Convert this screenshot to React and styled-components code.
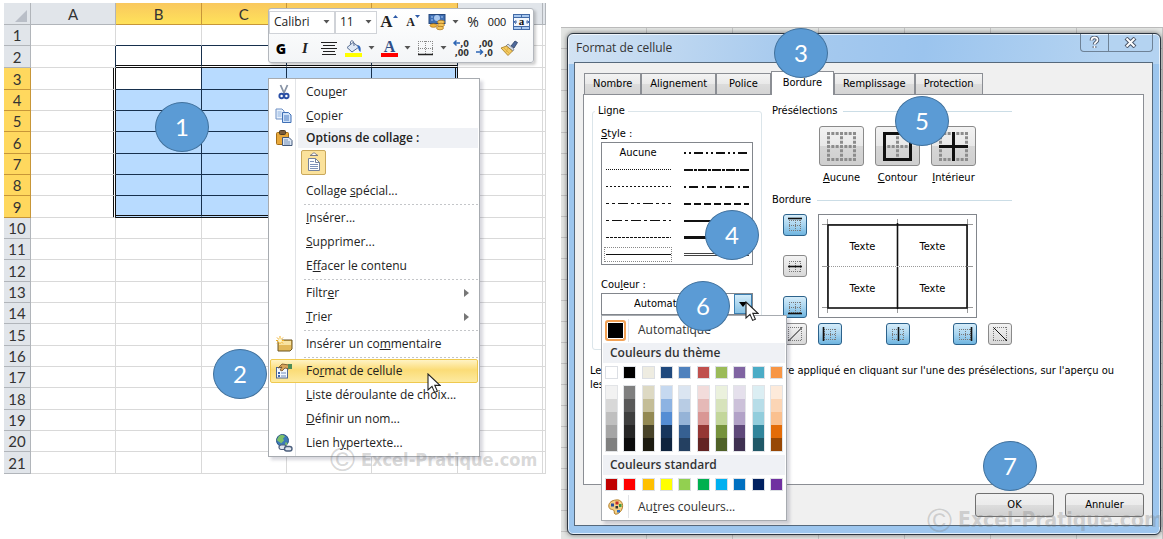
import React from 'react';

import styled, { createGlobalStyle, css } from 'styled-components';

const COLUMNS = ['A', 'B', 'C', 'D', 'E', 'F', ''];
const ROWS = Array.from({ length: 21 }, (_, i) => i + 1);
const TALL_ROWS = [2, 3, 6, 9, 12, 15, 18, 21];

const inBox = (row, col) => col >= 1 && col <= 4 && row >= 2 && row <= 9;
const isSelected = (row, col) => inBox(row, col) && row >= 3 && !(row === 3 && col === 1);

const GRID = '1px solid #d9d9d9';
const THIN = '1px solid #17304d';
const DOUBLE = '3px double #111';

const rightBorder = (row, col) => {
  if (row >= 3 && row <= 9 && (col === 0 || col === 4)) return DOUBLE;
  if (row >= 2 && row <= 9 && col >= 0 && col <= 4) return THIN;
  return GRID;
};

const bottomBorder = (row, col) => {
  if (col < 1 || col > 4) return GRID;
  if (row === 2 || row === 9) return DOUBLE;
  if (row >= 1 && row <= 8) return THIN;
  return GRID;
};

const THEME_COLORS = [
  ['#ffffff', '#f2f2f2', '#d8d8d8', '#bfbfbf', '#a5a5a5', '#7f7f7f'],
  ['#000000', '#7f7f7f', '#595959', '#3f3f3f', '#262626', '#0c0c0c'],
  ['#eeece1', '#ddd9c3', '#c4bd97', '#938953', '#494429', '#1d1b10'],
  ['#1f497d', '#c6d9f0', '#8db3e2', '#548dd4', '#17365d', '#0f243e'],
  ['#4f81bd', '#dbe5f1', '#b8cce4', '#95b3d7', '#366092', '#244061'],
  ['#c0504d', '#f2dcdb', '#e5b9b7', '#d99694', '#953734', '#632423'],
  ['#9bbb59', '#ebf1dd', '#d7e3bc', '#c3d69b', '#76923c', '#4f6128'],
  ['#8064a2', '#e5e0ec', '#ccc1d9', '#b2a2c7', '#5f497a', '#3f3151'],
  ['#4bacc6', '#dbeef3', '#b7dde8', '#92cddc', '#31859b', '#205867'],
  ['#f79646', '#fdeada', '#fbd5b5', '#fac08f', '#e36c09', '#974806'],
];

const STANDARD_COLORS = [
  '#c00000', '#ff0000', '#ffc000', '#ffff00', '#92d050',
  '#00b050', '#00b0f0', '#0070c0', '#002060', '#7030a0',
];

const LINE_STYLES = [
  null,
  { width: 2, dash: '2 3 2 3 9 3', name: 'Tirets deux points épais' },
  { width: 1, dash: '1 1', name: 'Pointillés fins' },
  { width: 2, dash: '9 1 3 1', name: 'Tirets obliques' },
  { width: 1, dash: '2 2', name: 'Pointillés' },
  { width: 2, dash: '2 3 9 4', name: 'Tirets points épais' },
  { width: 1, dash: '3 3 3 3 10 3', name: 'Tirets deux points' },
  { width: 2, dash: '7 3', name: 'Tirets épais' },
  { width: 1, dash: '3 3 10 3', name: 'Tirets points' },
  { width: 2, name: 'Trait moyen' },
  { width: 1, dash: '3 1', name: 'Tirets' },
  { width: 3, name: 'Trait épais' },
  { width: 1, name: 'Trait fin', selected: true },
  { width: 1, double: true, name: 'Trait double' },
];

/* "&" marks the access key, as in "Cou&per" */
const Hot = ({ text }) => {
  const i = text.indexOf('&');
  if (i < 0) return <span>{text}</span>;
  return (
    <span>
      {text.slice(0, i)}
      <u>{text[i + 1]}</u>
      {text.slice(i + 2)}
    </span>
  );
};

/* ---------- icons ---------- */

const ArrowDown = () => (
  <svg width="7" height="4" viewBox="0 0 7 4" aria-hidden="true">
    <path d="M0.5 0h6L3.5 3.6z" fill="#555" />
  </svg>
);

const Pointer = () => (
  <svg width="14" height="21" viewBox="0 0 14 21" aria-hidden="true">
    <path d="M1 1v16l4-3.6 2.6 6 2.8-1.2-2.6-5.8H13z" fill="#fff" stroke="#222" strokeWidth="1.1" />
  </svg>
);

const CutIcon = () => (
  <svg width="16" height="16" viewBox="0 0 16 16" aria-hidden="true">
    <path d="M4.500 1l4 9M11.500 1L7.500 10" stroke="#8793a5" strokeWidth="1.8" />
    <circle cx="5.6" cy="12" r="2.2" fill="none" stroke="#2a4fa5" strokeWidth="1.9" />
    <circle cx="10.4" cy="12" r="2.2" fill="none" stroke="#2a4fa5" strokeWidth="1.9" />
  </svg>
);

const CopyIcon = () => (
  <svg width="17" height="16" viewBox="0 0 17 16" aria-hidden="true">
    <path d="M1 1h6l2 2v8H1z" fill="#eaf2fc" stroke="#6d8fc4" />
    <path d="M2.5 4h4M2.5 6h4M2.5 8h4" stroke="#8db1e0" />
    <path d="M7.500 4.500h6l2.500 2.500v7.500H7.500z" fill="#cfe2f9" stroke="#3f6fb5" />
    <path d="M9 8h5M9 10h5M9 12h5" stroke="#4c7cc2" />
  </svg>
);

const PasteIcon = () => (
  <svg width="18" height="16" viewBox="0 0 18 16" aria-hidden="true">
    <rect x="1.500" y="2.500" width="12" height="12" rx="1" fill="#e9a93c" stroke="#a36d17" />
    <rect x="4.500" y="0.500" width="6" height="4" rx="1" fill="#7b5d3a" stroke="#4d3b24" />
    <path d="M7.500 7.500h6.500l3 3v5H7.500z" fill="#dce7f5" stroke="#44597a" />
    <path d="M9 10h4M9 12h6M9 14h6" stroke="#7791b8" />
  </svg>
);

const PasteOptionIcon = () => (
  <svg width="18" height="22" viewBox="0 0 18 22" aria-hidden="true">
    <path d="M5 3.500l2-1c0-2 4-2 4 0l2 1z" fill="#fff" stroke="#7c7c85" />
    <path d="M3.500 6.500h7l4 4v8h-11z" fill="#fff" stroke="#76829b" />
    <path d="M10.500 6.500v4h4" fill="none" stroke="#76829b" />
    <path d="M5 9.500h4M5 12.500h8M5 14.500h8M5 16.500h8" stroke="#7f93ba" />
  </svg>
);

const CommentIcon = () => (
  <svg width="18" height="16" viewBox="0 0 18 16" aria-hidden="true">
    <path d="M3 4h14v9l-2 2H3z" fill="#e3b95a" stroke="#6b5420" />
    <path d="M4 5h12v4H4z" fill="#f8e3a2" />
    <path d="M5 0v8M1 4.500h8M2 1.500l6 6M8 1.500l-6 6" stroke="#f2ae23" />
    <circle cx="5" cy="4.500" r="2" fill="#fff6c8" />
  </svg>
);

const FormatIcon = () => (
  <svg width="18" height="16" viewBox="0 0 18 16" aria-hidden="true">
    <rect x="1.500" y="4.500" width="11" height="10.500" fill="#f4f8fd" stroke="#4c6590" />
    <rect x="3" y="9" width="2" height="2" fill="#3d65ac" />
    <rect x="3" y="12" width="2" height="2" fill="#3d65ac" />
    <path d="M6 10h5M6 13h5" stroke="#6f8cbc" />
    <path d="M3 5l4-4 7 1v4l-4-1-3 3-2-1 2-3z" fill="#d8a45a" stroke="#6d4d22" strokeWidth="0.800" />
    <rect x="13" y="1" width="4" height="5" fill="#4f8c57" />
  </svg>
);

const LinkIcon = () => (
  <svg width="18" height="18" viewBox="0 0 18 18" aria-hidden="true">
    <circle cx="7.500" cy="6.500" r="6" fill="#3b78b8" stroke="#2a5482" />
    <path d="M4 2c2-1.500 5-1 6 .5l-2 2 1 2-3 3c-1-2-4-2-4-4z" fill="#7cc06a" />
    <path d="M10.500 8l2 1-.5 2-2 0z" fill="#7cc06a" />
    <rect x="4" y="11" width="7.500" height="4.500" rx="2.200" fill="#dfe5ee" stroke="#4c5f7d" strokeWidth="1.200" />
    <rect x="9.500" y="12.500" width="7.500" height="4.500" rx="2.200" fill="#dfe5ee" stroke="#4c5f7d" strokeWidth="1.400" />
  </svg>
);

const CurrencyIcon = () => (
  <svg width="18" height="18" viewBox="0 0 18 18" aria-hidden="true">
    <rect x="1" y="1.500" width="16" height="9" fill="#3f6fb4" stroke="#27497d" />
    <circle cx="9" cy="5" r="3" fill="#a9c8ef" />
    <path d="M3 4h2M3 7h2M13 4h2" stroke="#a9c8ef" />
    <ellipse cx="13" cy="9" rx="3.500" ry="1.800" fill="#f5c65a" stroke="#a86f14" strokeWidth="0.700" />
    <ellipse cx="13" cy="12" rx="3.500" ry="1.800" fill="#f5c65a" stroke="#a86f14" strokeWidth="0.700" />
    <ellipse cx="12" cy="15" rx="3.500" ry="1.800" fill="#f5c65a" stroke="#a86f14" strokeWidth="0.700" />
    <ellipse cx="5.500" cy="12.500" rx="3.500" ry="1.800" fill="#f0b53e" stroke="#a86f14" strokeWidth="0.700" />
  </svg>
);

const MergeIcon = () => (
  <svg width="17" height="16" viewBox="0 0 17 16" aria-hidden="true">
    <rect x="0.500" y="0.500" width="16" height="15" fill="#a9c9f0" stroke="#426aa6" />
    <path d="M0 3.500h17M0 12.500h17M8.500 0v4M8.500 12v4" stroke="#426aa6" />
    <rect x="1" y="4" width="15" height="8" fill="#f2f7fd" />
    <path d="M1 8h3M3 6.300L1.300 8 3 9.700M16 8h-3M14 6.300L15.700 8 14 9.700" fill="none" stroke="#26529a" />
    <text x="8.500" y="11" fontSize="11" fontWeight="700" textAnchor="middle" fontFamily="Liberation Serif, serif" fill="#111">a</text>
  </svg>
);

const AlignIcon = () => (
  <svg width="16" height="14" viewBox="0 0 16 14" aria-hidden="true">
    <path d="M0 1.500h16M2 4.500h12M0 7.500h16M2 10.500h12M1 13.500h14" stroke="#222" strokeWidth="1.200" />
  </svg>
);

const BucketIcon = () => (
  <svg width="17" height="17" viewBox="0 0 17 17" aria-hidden="true">
    <rect x="0" y="13" width="17" height="4" fill="#ffff00" />
    <path d="M2 7.500l6-5 6 4.500-7 5z" fill="#dfe9f6" stroke="#596f93" />
    <path d="M5.500 5c-1-6 4-6 3.500 1" fill="none" stroke="#596f93" />
    <path d="M12 5c4 0 4 4 3.500 7-1.500-1-2-2-2.500-5z" fill="#2f66bb" />
  </svg>
);

const FontColorIcon = () => (
  <svg width="17" height="18" viewBox="0 0 17 18" aria-hidden="true">
    <rect x="0" y="14" width="17" height="4" fill="#ff0000" />
    <text x="8.500" y="12.500" fontSize="16" fontWeight="700" textAnchor="middle" fontFamily="Liberation Serif, serif" fill="#2f4f88">A</text>
  </svg>
);

const BorderIcon = () => (
  <svg width="15" height="15" viewBox="0 0 15 15" aria-hidden="true">
    <path d="M0.500 0v14M7.500 0v14M14.500 0v14M0 0.500h15M0 7.500h15" stroke="#888" strokeDasharray="1 1" />
    <path d="M0 13.500h15" stroke="#222" strokeWidth="1.500" />
  </svg>
);

const DecimalIcon = ({ more }) => (
  <svg width="18" height="20" viewBox="0 0 18 20" aria-hidden="true">
    <g fontSize="9" fontWeight="700" fontFamily="DejaVu Sans Condensed, sans-serif" fill="#333">
      <text x="17" y="9" textAnchor="end">{more ? ',0' : ',00'}</text>
      <text x="17" y="18" textAnchor="end">{more ? ',00' : ',0'}</text>
    </g>
    {more ? (
      <path d="M8 5H2M4.500 2.500L2 5l2.500 2.500" fill="none" stroke="#2d66b5" strokeWidth="1.500" />
    ) : (
      <path d="M0 14h6M4 11.500L6.500 14 4 16.500" fill="none" stroke="#2d66b5" strokeWidth="1.500" />
    )}
  </svg>
);

const BrushIcon = () => (
  <svg width="18" height="16" viewBox="0 0 18 16" aria-hidden="true">
    <path d="M11 6l4-5 2.500 1.500L14 8z" fill="#4f6a9c" stroke="#2d4063" strokeWidth="0.800" />
    <path d="M8 4l6 5-1 2-7-5z" fill="#d7dde7" stroke="#6e7a8f" strokeWidth="0.800" />
    <path d="M6.500 6l6 5-4.500 4.500L1 8z" fill="#f3ca62" stroke="#a57a1c" strokeWidth="0.800" />
    <path d="M4 8l5 5M8 8L6 12" stroke="#dca93a" strokeWidth="0.800" />
  </svg>
);

const PaletteIcon = () => (
  <svg width="16" height="16" viewBox="0 0 16 16" aria-hidden="true">
    <path d="M8 1c5-1 8 4 6 9-1 3-5 6-7 5-1.500-1 0-3-1.500-4C4 10 1 11 .8 7 .7 3.500 4 1.300 8 1z" fill="#f3cf86" stroke="#b37f29" />
    <rect x="3" y="4.500" width="3" height="3" fill="#2c4f9c" />
    <rect x="7.500" y="2.500" width="3" height="3" fill="#c22b25" />
    <rect x="11" y="5" width="2.500" height="3" fill="#3f9b45" />
    <rect x="7.500" y="7" width="2.500" height="2.500" fill="#333" />
    <rect x="9" y="11" width="3" height="2.500" fill="#2f6fc5" />
  </svg>
);

const PresetIcon = ({ kind }) => (
  <svg width="29" height="29" viewBox="0 0 29 29" aria-hidden="true">
    <path d="M1.500 0v29M14.500 0v29M27.500 0v29M0 1.500h29M0 14.500h29M0 27.500h29" stroke="#8c8c8c" strokeWidth="3" strokeDasharray="3 1.330" />
    {kind === 'outline' && <rect x="1.500" y="1.500" width="26" height="26" fill="none" stroke="#111" strokeWidth="3" />}
    {kind === 'inside' && <path d="M14.500 0v29M0 14.500h29" stroke="#111" strokeWidth="3" />}
  </svg>
);

const EDGE_PATHS = {
  top: 'M1 1.500h14',
  middle: 'M1 8.500h14',
  bottom: 'M1 14.500h14',
  left: 'M1.500 1v14',
  center: 'M8.500 1v14',
  right: 'M14.500 1v14',
  up: 'M1.500 15L15 1.500',
  down: 'M1.500 1.500L15 15',
};

const EdgeIcon = ({ edge }) => {
  const diagonal = edge === 'up' || edge === 'down';
  return (
    <svg width="16" height="16" viewBox="0 0 16 16" aria-hidden="true">
      <path
        d={diagonal ? 'M1.500 1v14M14.500 1v14M1 1.500h14M1 14.500h14' : 'M2.500 3v11M8.500 3v11M13.500 3v11M2 3.500h12M2 8.500h12M2 13.500h12'}
        stroke="#777"
        strokeDasharray="1 1"
      />
      <path d={EDGE_PATHS[edge]} stroke="#111" strokeWidth={diagonal ? 1 : 1.6} />
    </svg>
  );
};

const LineSample = ({ line }) => (
  <svg width="65" height="5" viewBox="0 0 65 5" aria-hidden="true">
    {line.double ? (
      <path d="M0 1.500h65M0 3.500h65" stroke="#444" />
    ) : (
      <path d={line.width === 2 ? 'M0 3h65' : 'M0 2.500h65'} stroke="#111" strokeWidth={line.width} strokeDasharray={line.dash} />
    )}
  </svg>
);

/* ---------- spreadsheet ---------- */

const Sheet = () => (
  <SheetTable>
    <thead>
      <SheetRow $tall>
        <CornerCell>
          <svg width="12" height="12" viewBox="0 0 12 12" aria-hidden="true">
            <path d="M12 0v12H0z" fill="#b9bec7" />
          </svg>
        </CornerCell>
        {COLUMNS.map((name, i) => (
          <ColumnHead key={i} scope="col" $active={i >= 1 && i <= 4} $last={i === 6}>
            {name}
          </ColumnHead>
        ))}
      </SheetRow>
    </thead>
    <tbody>
      {ROWS.map((row) => (
        <SheetRow key={row} $tall={TALL_ROWS.includes(row)}>
          <RowHead scope="row" $active={row >= 3 && row <= 9}>{row}</RowHead>
          {COLUMNS.map((_, col) => (
            <Cell
              key={col}
              $selected={isSelected(row, col)}
              $right={rightBorder(row, col)}
              $bottom={bottomBorder(row, col)}
            />
          ))}
        </SheetRow>
      ))}
    </tbody>
  </SheetTable>
);

const MiniToolbar = () => (
  <Toolbar>
    <ToolbarRow>
      <ToolbarSelect aria-label="Police" $width={66}>
        <option>Calibri</option>
      </ToolbarSelect>
      <ToolbarSelect aria-label="Taille" $width={42}>
        <option>11</option>
      </ToolbarSelect>
      <ToolButton aria-label="Agrandir la police">
        <FontSizeLetter $size={17}>A</FontSizeLetter>
        <svg width="5" height="14" viewBox="0 0 5 14" aria-hidden="true"><path d="M0 3l2.500-3L5 3z" fill="#2d5aa8" /></svg>
      </ToolButton>
      <ToolButton aria-label="Réduire la police">
        <FontSizeLetter $size={12}>A</FontSizeLetter>
        <svg width="5" height="14" viewBox="0 0 5 14" aria-hidden="true"><path d="M0 0h5L2.500 3z" fill="#2d5aa8" /></svg>
      </ToolButton>
      <ToolButton aria-label="Format comptabilité"><CurrencyIcon /></ToolButton>
      <ToolArrow aria-label="Autres formats"><ArrowDown /></ToolArrow>
      <ToolButton>%</ToolButton>
      <ToolButton $small>000</ToolButton>
      <ToolButton aria-label="Fusionner et centrer"><MergeIcon /></ToolButton>
    </ToolbarRow>
    <ToolbarRow>
      <ToolButton $bold>G</ToolButton>
      <ToolButton $italic>I</ToolButton>
      <ToolButton aria-label="Centrer"><AlignIcon /></ToolButton>
      <ToolButton aria-label="Couleur de remplissage"><BucketIcon /></ToolButton>
      <ToolArrow aria-label="Autres remplissages"><ArrowDown /></ToolArrow>
      <ToolButton aria-label="Couleur de police"><FontColorIcon /></ToolButton>
      <ToolArrow aria-label="Autres couleurs de police"><ArrowDown /></ToolArrow>
      <ToolButton aria-label="Bordures"><BorderIcon /></ToolButton>
      <ToolArrow aria-label="Autres bordures"><ArrowDown /></ToolArrow>
      <ToolButton aria-label="Ajouter une décimale"><DecimalIcon more /></ToolButton>
      <ToolButton aria-label="Réduire les décimales"><DecimalIcon /></ToolButton>
      <ToolButton aria-label="Reproduire la mise en forme"><BrushIcon /></ToolButton>
    </ToolbarRow>
  </Toolbar>
);

const MenuItem = ({ icon, text, submenu, active }) => (
  <MenuButton role="menuitem" $active={active}>
    <MenuIcon>{icon}</MenuIcon>
    <Hot text={text} />
    {submenu && (
      <SubmenuArrow width="5" height="8" viewBox="0 0 5 8" aria-hidden="true">
        <path d="M0 0l5 4-5 4z" fill="#777" />
      </SubmenuArrow>
    )}
  </MenuButton>
);

const ContextMenu = () => (
  <Menu role="menu">
    <MenuItem icon={<CutIcon />} text="Cou&per" />
    <MenuItem icon={<CopyIcon />} text="&Copier" />
    <MenuHeading>
      <MenuIcon><PasteIcon /></MenuIcon>
      <span>Options de collage :</span>
    </MenuHeading>
    <PasteRow>
      <PasteButton aria-label="Coller"><PasteOptionIcon /></PasteButton>
    </PasteRow>
    <MenuItem text="Collage &spécial..." />
    <MenuSeparator />
    <MenuItem text="&Insérer..." />
    <MenuItem text="&Supprimer..." />
    <MenuItem text="E&ffacer le contenu" />
    <MenuSeparator />
    <MenuItem text="Filtr&er" submenu />
    <MenuItem text="&Trier" submenu />
    <MenuSeparator />
    <MenuItem icon={<CommentIcon />} text="Insérer un co&mmentaire" />
    <MenuSeparator />
    <MenuItem icon={<FormatIcon />} text="Fo&rmat de cellule" active />
    <MenuItem text="&Liste déroulante de choix..." />
    <MenuItem text="&Définir un nom..." />
    <MenuItem icon={<LinkIcon />} text="Lien h&ypertexte..." />
  </Menu>
);

/* ---------- dialog ---------- */

const ColorPalette = () => (
  <Palette role="menu">
    <PaletteItem $tall>
      <PaletteIconBox><AutoSwatch /></PaletteIconBox>
      <span>Automatique</span>
    </PaletteItem>
    <PaletteHeading>Couleurs du thème</PaletteHeading>
    <SwatchGrid>
      {THEME_COLORS.map(([base]) => (
        <Swatch key={base} $color={base} aria-label={base} />
      ))}
    </SwatchGrid>
    <SwatchGrid>
      {THEME_COLORS.map(([base, ...shades]) => (
        <ShadeColumn key={base}>
          {shades.map((shade) => (
            <Shade key={shade} $color={shade} aria-label={shade} />
          ))}
        </ShadeColumn>
      ))}
    </SwatchGrid>
    <PaletteHeading>Couleurs standard</PaletteHeading>
    <SwatchGrid>
      {STANDARD_COLORS.map((color) => (
        <Swatch key={color} $color={color} aria-label={color} />
      ))}
    </SwatchGrid>
    <PaletteItem>
      <PaletteIconBox><PaletteIcon /></PaletteIconBox>
      <Hot text="Au&tres couleurs..." />
    </PaletteItem>
  </Palette>
);

const LineGroup = () => (
  <LineFieldset>
    <legend>Ligne</legend>
    <FieldLabel id="style-label"><Hot text="&Style :" /></FieldLabel>
    <StyleList role="listbox" aria-labelledby="style-label">
      {LINE_STYLES.map((line, i) => (
        <StyleOption
          key={i}
          role="option"
          aria-selected={!!(line && line.selected)}
          aria-label={line ? line.name : undefined}
          $selected={line && line.selected}
        >
          {line ? <LineSample line={line} /> : 'Aucune'}
        </StyleOption>
      ))}
    </StyleList>
    <FieldLabel as="label" htmlFor="line-color" $spaced><Hot text="Cou&leur :" /></FieldLabel>
    <ColorField>
      <ColorSelect id="line-color">
        <option>Automatique</option>
      </ColorSelect>
      <DropButton aria-label="Ouvrir les couleurs">
        <svg width="8" height="5" viewBox="0 0 8 5" aria-hidden="true"><path d="M0 0h8L4 5z" fill="#000" /></svg>
      </DropButton>
      <ColorPalette />
    </ColorField>
  </LineFieldset>
);

const Preview = () => (
  <PreviewBox>
    <svg width="151" height="94" viewBox="0 0 151 94" aria-hidden="true">
      <path d="M0 5.500h151M0 88.500h151M5.500 0v94M145.500 0v94M75.500 0v94M0 47.500h151" stroke="#999" />
      <rect x="6" y="6" width="139" height="83" fill="#fff" stroke="#111" strokeWidth="1.600" />
      <path d="M75.500 4v86" stroke="#111" strokeWidth="1.600" />
      <path d="M7 47.500h137" stroke="#fff" />
      <path d="M5 47.500h141" stroke="#999" strokeDasharray="1 1" />
    </svg>
    <PreviewTexts>
      {[1, 2, 3, 4].map((n) => (
        <span key={n}>Texte</span>
      ))}
    </PreviewTexts>
  </PreviewBox>
);

const BorderGroups = () => (
  <BorderColumn>
    <GroupTitle>Présélections</GroupTitle>
    <Presets>
      <Preset>
        <PresetButton id="preset-none"><PresetIcon kind="none" /></PresetButton>
        <label htmlFor="preset-none"><Hot text="&Aucune" /></label>
      </Preset>
      <Preset>
        <PresetButton id="preset-outline"><PresetIcon kind="outline" /></PresetButton>
        <label htmlFor="preset-outline"><Hot text="&Contour" /></label>
      </Preset>
      <Preset>
        <PresetButton id="preset-inside"><PresetIcon kind="inside" /></PresetButton>
        <label htmlFor="preset-inside"><Hot text="&Intérieur" /></label>
      </Preset>
    </Presets>
    <GroupTitle>Bordure</GroupTitle>
    <BorderGrid>
      <EdgeStack>
        <EdgeButton $on aria-label="Bordure supérieure"><EdgeIcon edge="top" /></EdgeButton>
        <EdgeButton aria-label="Bordure horizontale"><EdgeIcon edge="middle" /></EdgeButton>
        <EdgeButton $on aria-label="Bordure inférieure"><EdgeIcon edge="bottom" /></EdgeButton>
      </EdgeStack>
      <Preview />
      <span />
      <EdgeButton aria-label="Diagonale montante"><EdgeIcon edge="up" /></EdgeButton>
      <EdgeRow>
        <EdgeButton $on aria-label="Bordure gauche"><EdgeIcon edge="left" /></EdgeButton>
        <EdgeButton $on aria-label="Bordure verticale"><EdgeIcon edge="center" /></EdgeButton>
        <EdgeButton $on aria-label="Bordure droite"><EdgeIcon edge="right" /></EdgeButton>
      </EdgeRow>
      <EdgeButton aria-label="Diagonale descendante"><EdgeIcon edge="down" /></EdgeButton>
    </BorderGrid>
  </BorderColumn>
);

const FormatDialog = () => (
  <Dialog role="dialog" aria-labelledby="dialog-title">
    <TitleBar>
      <DialogTitle id="dialog-title">Format de cellule</DialogTitle>
      <WindowButtons>
        <WindowButton aria-label="Aide">
          <svg width="11" height="13" viewBox="0 0 11 13" aria-hidden="true">
            <path d="M2.500 4.500c0-4 6-4 6-.5 0 2.500-3 2-3 4.500M5.500 10v2" fill="none" stroke="#4a5568" strokeWidth="3.600" />
            <path d="M2.500 4.500c0-4 6-4 6-.5 0 2.500-3 2-3 4.500M5.500 10v2" fill="none" stroke="#fff" strokeWidth="1.800" />
          </svg>
        </WindowButton>
        <WindowButton aria-label="Fermer" $wide>
          <svg width="13" height="11" viewBox="0 0 13 11" aria-hidden="true">
            <path d="M2 1l9 9M11 1l-9 9" stroke="#4a5568" strokeWidth="4" />
            <path d="M2.500 1.500l8 8M10.500 1.500l-8 8" stroke="#fff" strokeWidth="2" />
          </svg>
        </WindowButton>
      </WindowButtons>
    </TitleBar>
    <Client>
      <Tabs role="tablist">
        <Tab role="tab">Nombre</Tab>
        <Tab role="tab">Alignement</Tab>
        <Tab role="tab" $wide>Police</Tab>
        <Tab role="tab" aria-selected="true" $active>Bordure</Tab>
        <Tab role="tab">Remplissage</Tab>
        <Tab role="tab">Protection</Tab>
      </Tabs>
      <TabPanel role="tabpanel">
        <PanelColumns>
          <LineGroup />
          <BorderGroups />
        </PanelColumns>
        <Hint>
          Le style de bordure sélectionné peut être appliqué en cliquant sur l'une des présélections, sur l'aperçu ou
          les boutons ci-dessus.
        </Hint>
      </TabPanel>
      <Footer>
        <DialogButton>OK</DialogButton>
        <DialogButton>Annuler</DialogButton>
      </Footer>
    </Client>
  </Dialog>
);

const App = () => (
  <>
    <GlobalStyle />
    <Page>
      <SheetPane>
        <Sheet />
        <MiniToolbar />
        <ContextMenu />
        <Floating $x={423} $y={373}><Pointer /></Floating>
        <Badge $x={151} $y={102}>1</Badge>
        <Badge $x={209} $y={349}>2</Badge>
        <Watermark $x={326} $y={444} $size={18}><span>©</span>Excel-Pratique.com</Watermark>
      </SheetPane>
      <DialogPane>
        <FormatDialog />
        <Floating $x={184} $y={273}><Pointer /></Floating>
        <Badge $x={213} $y={0}>3</Badge>
        <Badge $x={144} $y={182}>4</Badge>
        <Badge $x={334} $y={68}>5</Badge>
        <Badge $x={115} $y={253}>6</Badge>
        <Badge $x={422} $y={413}>7</Badge>
        <Watermark $x={366} $y={477} $size={21}><span>©</span>Excel-Pratique.com</Watermark>
      </DialogPane>
    </Page>
  </>
);

const TAHOMA = `Tahoma, 'DejaVu Sans Condensed', 'DejaVu Sans', sans-serif`;
const SEGOE = `'Open Sans', 'Noto Sans', sans-serif`;

const GlobalStyle = createGlobalStyle`
  * {
    box-sizing: border-box;
  }

  body {
    margin: 0;
    background: #fff;
    font-family: ${SEGOE};
    font-size: 12px;
    line-height: 16px;
    color: #222;
  }

  button, select {
    margin: 0;
    padding: 0;
    border: 0;
    background: none;
    font: inherit;
    color: inherit;
  }

  svg {
    display: block;
    flex: none;
  }
`;

const Page = styled.main`
  display: flex;
  align-items: flex-start;
  gap: 15px;
  padding-left: 4px;
  overflow: hidden;
`;

const SheetPane = styled.section`
  position: relative;
  flex: 1 1 542px;
  padding-top: 3px;
`;

const SheetTable = styled.table`
  width: 100%;
  table-layout: fixed;
  border-collapse: separate;
  border-spacing: 0;
  font-family: Lato, sans-serif;
  font-size: 15px;
  line-height: 18px;
`;

const SheetRow = styled.tr`
  height: ${({ $tall }) => ($tall ? 22 : 21)}px;
`;

const headCell = css`
  padding: 0;
  border-right: 1px solid #b1b5ba;
  border-bottom: 1px solid #b1b5ba;
  background: #e1e5ea;
  font-weight: 400;
  color: #333;
`;

const CornerCell = styled.td`
  ${headCell}
  width: 27px;

  svg {
    margin: 4px 0 0 11px;
  }
`;

const ColumnHead = styled.th`
  ${headCell}
  ${({ $last }) => $last && 'width: 3px;'}
  ${({ $active }) =>
    $active &&
    css`
      border-color: #c79638;
      background: linear-gradient(#f9c85e, #ffe25a);
    `}
`;

const RowHead = styled.th`
  ${headCell}
  ${({ $active }) =>
    $active &&
    css`
      border-color: #c79638;
      background: #ffd85e;
    `}
`;

const Cell = styled.td`
  padding: 0;
  border-right: ${({ $right }) => $right};
  border-bottom: ${({ $bottom }) => $bottom};
  background: ${({ $selected }) => ($selected ? '#b8dbff' : '#fff')};
`;

const Toolbar = styled.div`
  position: absolute;
  left: 264px;
  top: 8px;
  padding: 0 0 1px;
  border: 1px solid #b3b7bd;
  border-radius: 3px;
  background: linear-gradient(#fff, #f3f5f7);
  box-shadow: 2px 2px 3px rgba(0, 0, 0, 0.2);
`;

const ToolbarRow = styled.div`
  display: flex;
  align-items: center;
  height: 26px;
`;

const ToolbarSelect = styled.select`
  width: ${({ $width }) => $width}px;
  height: 23px;
  padding-left: 4px;
  border: 1px solid #d0d3d8;
  appearance: none;
  background:
    url("data:image/svg+xml,%3Csvg xmlns='http://www.w3.org/2000/svg' width='7' height='4'%3E%3Cpath d='M.5 0h6l-3 3.600z' fill='%23555'/%3E%3C/svg%3E")
      no-repeat right 4px center,
    #fff;
`;

const ToolButton = styled.button`
  display: flex;
  align-items: center;
  justify-content: center;
  width: 24px;
  height: 24px;
  font-size: 14px;
  ${({ $small }) => $small && `font: 11px 'Liberation Sans', sans-serif;`}
  ${({ $bold }) => $bold && `font: 900 14px 'Noto Sans', sans-serif; color: #000;`}
  ${({ $italic }) => $italic && `font: italic 700 15px 'Liberation Serif', serif;`}
`;

const ToolArrow = styled.button`
  display: flex;
  align-items: center;
  justify-content: center;
  width: 12px;
  height: 24px;
`;

const FontSizeLetter = styled.span`
  font: 700 ${({ $size }) => $size}px 'Liberation Serif', serif;
`;

const Menu = styled.div`
  position: absolute;
  left: 264px;
  top: 78px;
  width: 212px;
  padding: 1px;
  border: 1px solid #a7abb0;
  background: linear-gradient(90deg, #fff 26px, #e2e4e7 26px, #e2e4e7 27px, #fff 27px);
  box-shadow: 3px 3px 3px rgba(60, 60, 90, 0.2);
`;

const MenuButton = styled.button`
  display: flex;
  align-items: center;
  gap: 10px;
  width: 100%;
  height: 24px;
  border: 1px solid transparent;
  border-radius: 2px;
  text-align: left;
  ${({ $active }) =>
    $active &&
    css`
      border-color: #efc94f;
      background: linear-gradient(#fff3c4, #fbdc77 45%, #fdeaa0);
    `}
`;

const MenuIcon = styled.span`
  display: flex;
  justify-content: center;
  width: 25px;
`;

const SubmenuArrow = styled.svg`
  margin-left: auto;
  margin-right: 8px;
`;

const MenuHeading = styled.div`
  display: flex;
  align-items: center;
  gap: 10px;
  height: 20px;
  padding-left: 1px;
  background: linear-gradient(90deg, transparent 28px, #eff1f5 28px);
  font-weight: 600;
`;

const PasteRow = styled.div`
  display: flex;
  align-items: flex-start;
  height: 31px;
  padding: 2px 0 0 31px;
`;

const PasteButton = styled.button`
  display: flex;
  align-items: center;
  justify-content: center;
  width: 25px;
  height: 25px;
  border: 1px solid #c9a85c;
  border-radius: 2px;
  background: #fbe29b;
`;

const MenuSeparator = styled.hr`
  height: 3px;
  margin: 0 0 0 34px;
  border: 0;
  background: repeating-linear-gradient(90deg, #c4c6c9 0 2px, transparent 2px 4px) 0 1px / 100% 1px no-repeat;
`;

const DialogPane = styled.section`
  position: relative;
  flex: 1 1 602px;
  margin-top: 27px;
  padding: 5px 2px 5px 6px;
  border-top: 1px solid #bbb;
  background:
    repeating-linear-gradient(90deg, transparent 0 85px, #c4c4c4 85px 86px),
    repeating-linear-gradient(transparent 0 20px, #c4c4c4 20px 21px),
    #e3e5e3;
`;

const Dialog = styled.div`
  padding: 0 7px 8px 6px;
  border: 1px solid #2d3640;
  border-radius: 6px;
  background:
    linear-gradient(100deg, #d3e3f3, #a9cbee 35%, #9bc4ee 60%, #b4d3f1 90%) top / 100% 30px no-repeat,
    #9dc6ee;
  box-shadow:
    inset 0 0 0 1px rgba(255, 255, 255, 0.7),
    0 0 5px rgba(0, 0, 0, 0.5);
  font-family: ${TAHOMA};
  font-size: 11px;
  color: #000;
`;

const TitleBar = styled.div`
  display: flex;
  justify-content: space-between;
  height: 28px;
`;

const DialogTitle = styled.h1`
  margin: 0;
  padding: 6px 0 0 2px;
  font-family: ${SEGOE};
  font-size: 12px;
  font-weight: 400;
  line-height: 16px;
  color: #333;
`;

const WindowButtons = styled.div`
  display: flex;
  height: 18px;
  border: 1px solid #6e8296;
  border-top: 0;
  border-radius: 0 0 4px 4px;
`;

const WindowButton = styled.button`
  display: flex;
  align-items: center;
  justify-content: center;
  width: ${({ $wide }) => ($wide ? 44 : 27)}px;
  ${({ $wide }) => $wide && 'border-left: 1px solid #6e8296;'}
`;

const Client = styled.div`
  padding: 8px;
  border: 1px solid #56697c;
  background: #f0f0f0;
`;

const Tabs = styled.div`
  display: flex;
  align-items: flex-end;
  height: 23px;
  padding-left: 1px;
`;

const Tab = styled.button`
  height: 21px;
  padding: 0 ${({ $wide }) => ($wide ? 12 : 8)}px;
  border: 1px solid #8b8e94;
  border-bottom: 0;
  background: linear-gradient(#f3f3f3, #e9e9e9 50%, #dcdcdc 50%, #d4d4d4);
  ${({ $active }) =>
    $active &&
    css`
      height: 24px;
      padding: 0 11px 1px;
      margin-bottom: -1px;
      background: #fff;
    `}
`;

const TabPanel = styled.div`
  min-height: 391px;
  padding: 8px;
  border: 1px solid #8b8e94;
  background: #fff;
`;

const PanelColumns = styled.div`
  display: flex;
  gap: 10px;
`;

const LineFieldset = styled.fieldset`
  flex: none;
  width: 170px;
  height: 247px;
  margin: 0;
  padding: 7px 8px 0;
  border: 1px solid #dbe5ea;
  border-radius: 3px;

  legend {
    margin-left: -6px;
    padding: 0 3px;
  }
`;

const FieldLabel = styled.div`
  display: block;
  padding-top: ${({ $spaced }) => ($spaced ? 12 : 0)}px;
`;

const StyleList = styled.div`
  display: grid;
  grid-template-columns: 1fr 1fr;
  column-gap: 8px;
  padding: 1px;
  border: 1px solid #82868c;
`;

const StyleOption = styled.button`
  display: flex;
  align-items: center;
  justify-content: center;
  height: 17px;
  ${({ $selected }) => $selected && 'outline: 1px dotted #888; outline-offset: -2px;'}
`;

const ColorField = styled.div`
  position: relative;
  display: flex;
  height: 22px;
  border: 1px solid #82868c;
`;

const ColorSelect = styled.select`
  flex: 1;
  min-width: 0;
  padding-left: 32px;
  appearance: none;
`;

const DropButton = styled.button`
  display: flex;
  align-items: center;
  justify-content: center;
  width: 18px;
  border: 1px solid #3c7fb1;
  background: linear-gradient(#d3ecfa, #86c1e4);
`;

const Palette = styled.div`
  position: absolute;
  z-index: 1;
  left: -1px;
  top: 21px;
  width: 186px;
  padding: 1px;
  border: 1px solid #a7abb0;
  background: #fff;
  box-shadow: 3px 3px 3px rgba(60, 60, 90, 0.2);
  font-family: ${SEGOE};
  font-size: 12px;
  color: #333;
`;

const PaletteItem = styled.button`
  display: flex;
  align-items: center;
  gap: 9px;
  width: 100%;
  height: ${({ $tall }) => ($tall ? 26 : 25)}px;
`;

const PaletteIconBox = styled.span`
  display: flex;
  align-items: center;
  justify-content: center;
  width: 26px;
  height: 23px;
  border-right: 1px solid #e2e4e7;
`;

const AutoSwatch = styled.span`
  width: 21px;
  height: 21px;
  border: 2px solid #f2a154;
  border-radius: 3px;
  background: #000;
  box-shadow: inset 0 0 0 1px #fff;
`;

const PaletteHeading = styled.div`
  height: 20px;
  padding-left: 7px;
  background: #eff1f5;
  font-weight: 600;
  line-height: 20px;
`;

const SwatchGrid = styled.div`
  display: flex;
  justify-content: space-between;
  padding: 3px 2px;
`;

const Swatch = styled.button`
  width: 13px;
  height: 13px;
  border: 1px solid #dcdfe4;
  background: ${({ $color }) => $color};
`;

const ShadeColumn = styled.div`
  display: flex;
  flex-direction: column;
  border: 1px solid #e2e4e7;
`;

const Shade = styled.button`
  width: 11px;
  height: 13px;
  background: ${({ $color }) => $color};
`;

const BorderColumn = styled.div`
  flex: none;
  width: 240px;
`;

const GroupTitle = styled.h2`
  display: flex;
  align-items: center;
  gap: 6px;
  margin: 0;
  font-size: 11px;
  font-weight: 400;
  line-height: 16px;

  &::after {
    content: '';
    flex: 1;
    border-top: 1px solid #cbdde6;
  }
`;

const Presets = styled.div`
  display: flex;
  justify-content: center;
  padding: 7px 0 6px 11px;
`;

const Preset = styled.div`
  display: flex;
  flex-direction: column;
  align-items: center;
  gap: 4px;
  width: 56px;
`;

const PresetButton = styled.button`
  display: flex;
  align-items: center;
  justify-content: center;
  width: 45px;
  height: 40px;
  border: 1px solid #8a8a8a;
  border-radius: 3px;
  background: linear-gradient(#f2f2f2, #e8e8e8 50%, #d6d6d6 50%, #cfcfcf);
`;

const BorderGrid = styled.div`
  display: grid;
  grid-template-columns: 24px 159px 24px;
  justify-content: end;
  gap: 5px 11px;
  padding-top: 6px;
`;

const EdgeStack = styled.div`
  display: flex;
  flex-direction: column;
  justify-content: space-between;
`;

const EdgeRow = styled.div`
  display: flex;
  justify-content: space-between;
`;

const EdgeButton = styled.button`
  display: flex;
  align-items: center;
  justify-content: center;
  width: 24px;
  height: 22px;
  border: 1px solid ${({ $on }) => ($on ? '#2c628b' : '#8a8a8a')};
  border-radius: 3px;
  background: ${({ $on }) =>
    $on ? 'linear-gradient(#d5ecf9, #a9d5f0 50%, #6fb5e0)' : 'linear-gradient(#f3f3f3, #d8d8d8)'};
`;

const PreviewBox = styled.div`
  display: grid;
  place-items: center;
  height: 104px;
  border: 1px solid #82868c;

  > * {
    grid-area: 1 / 1;
  }
`;

const PreviewTexts = styled.div`
  display: grid;
  grid-template-columns: 70px 70px;
  grid-auto-rows: 42px;
  place-items: center;
  padding-top: 4px;
`;

const Hint = styled.p`
  margin: 14px 16px 0 -2px;
  line-height: 14px;
`;

const Footer = styled.div`
  display: flex;
  justify-content: flex-end;
  gap: 11px;
  padding-top: 8px;
`;

const DialogButton = styled.button`
  width: 79px;
  height: 24px;
  border: 1px solid #707070;
  border-radius: 3px;
  background: linear-gradient(#f2f2f2, #ebebeb 50%, #dddddd 50%, #cfcfcf);
`;

const Floating = styled.div`
  position: absolute;
  z-index: 2;
  left: ${({ $x }) => $x}px;
  top: ${({ $y }) => $y}px;
`;

const Badge = styled(Floating)`
  display: flex;
  align-items: center;
  justify-content: center;
  width: 54px;
  height: 50px;
  border: 1px solid #41719c;
  border-radius: 50%;
  background: #5b9bd5;
  font-family: Lato, sans-serif;
  font-size: 24px;
  line-height: 28px;
  color: #fff;
`;

const Watermark = styled(Floating)`
  display: flex;
  align-items: center;
  font: 700 ${({ $size }) => $size}px 'DejaVu Sans Condensed', 'DejaVu Sans', sans-serif;
  white-space: nowrap;
  color: rgba(120, 120, 120, 0.3);
  pointer-events: none;

  span {
    width: 31px;
    font: 34px/30px 'Liberation Sans', sans-serif;
  }
`;

export default App;
